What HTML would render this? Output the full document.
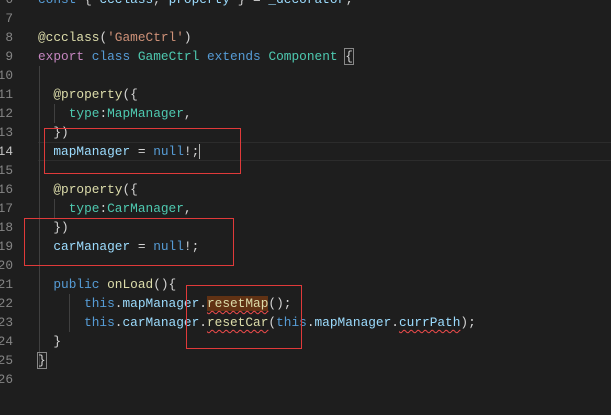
<!DOCTYPE html><html><head><style>
body{margin:0;width:611px;height:415px;background:#1e1e1e;overflow:hidden;position:relative;font-family:"Liberation Mono",monospace;font-size:12.8px}
.l{position:absolute;left:0;height:19px;line-height:19px;white-space:pre;color:#d4d4d4}
.n{position:absolute;left:-20px;width:33px;text-align:right;color:#858585}
.c{position:absolute;left:38px}
.k{color:#569cd6}.g{color:#4ec9b0}.s{color:#ce9178}.f{color:#dcdcaa}.v{color:#9cdcfe}.p{color:#c586c0}
.sq{text-decoration:underline wavy #f14c4c;text-decoration-thickness:1px;text-underline-offset:3px}
.box{position:absolute;border:1.5px solid #e03a3a}
.ig{position:absolute;width:1px;background:#404040}
</style></head><body>
<div style="position:absolute;left:38px;top:142px;width:573px;height:17px;border-top:1px solid #2c2c2c;border-bottom:1px solid #2c2c2c"></div>
<div class="ig" style="left:39px;top:66px;height:302px"></div>
<div class="ig" style="left:54px;top:104px;height:19px"></div>
<div class="ig" style="left:54px;top:199px;height:19px"></div>
<div class="ig" style="left:69px;top:294px;height:38px"></div>
<div class="l" style="top:-10px"><span class="n">6</span><span class="c"><span class="k">const</span> { <span class="v">ccclass</span>, <span class="v">property</span> } = <span class="v">_decorator</span>;</span></div>
<div class="l" style="top:9px"><span class="n">7</span></div>
<div class="l" style="top:28px"><span class="n">8</span><span class="c"><span class="f">@ccclass</span>(<span class="s">'GameCtrl'</span>)</span></div>
<div class="l" style="top:47px"><span class="n">9</span><span class="c"><span class="p">export</span> <span class="k">class</span> <span class="g">GameCtrl</span> <span class="k">extends</span> <span class="g">Component</span> <span style="outline:1px solid #888">{</span></span></div>
<div class="l" style="top:66px"><span class="n">10</span></div>
<div class="l" style="top:85px"><span class="n">11</span><span class="c">  <span class="f">@property</span>({</span></div>
<div class="l" style="top:104px"><span class="n">12</span><span class="c">    <span class="g">type</span>:<span class="g">MapManager</span>,</span></div>
<div class="l" style="top:123px"><span class="n">13</span><span class="c">  })</span></div>
<div class="l" style="top:142px"><span class="n" style="color:#c6c6c6">14</span><span class="c">  <span class="v">mapManager</span> = <span class="k">null</span>!;<span style="border-left:1.5px solid #aeafad"> </span></span></div>
<div class="l" style="top:161px"><span class="n">15</span></div>
<div class="l" style="top:180px"><span class="n">16</span><span class="c">  <span class="f">@property</span>({</span></div>
<div class="l" style="top:199px"><span class="n">17</span><span class="c">    <span class="g">type</span>:<span class="g">CarManager</span>,</span></div>
<div class="l" style="top:218px"><span class="n">18</span><span class="c">  })</span></div>
<div class="l" style="top:237px"><span class="n">19</span><span class="c">  <span class="v">carManager</span> = <span class="k">null</span>!;</span></div>
<div class="l" style="top:256px"><span class="n">20</span></div>
<div class="l" style="top:275px"><span class="n">21</span><span class="c">  <span class="k">public</span> <span class="f">onLoad</span>(){</span></div>
<div class="l" style="top:294px"><span class="n">22</span><span class="c">      <span class="k">this</span>.<span class="v">mapManager</span>.<span class="f sq" style="background:#613214">resetMap</span>();</span></div>
<div class="l" style="top:313px"><span class="n">23</span><span class="c">      <span class="k">this</span>.<span class="v">carManager</span>.<span class="f sq">resetCar</span>(<span class="k">this</span>.<span class="v">mapManager</span>.<span class="v sq">currPath</span>);</span></div>
<div class="l" style="top:332px"><span class="n">24</span><span class="c">  }</span></div>
<div class="l" style="top:351px"><span class="n">25</span><span class="c"><span style="outline:1px solid #888">}</span></span></div>
<div class="l" style="top:370px"><span class="n">26</span></div>
<div class="box" style="left:44px;top:128px;width:195px;height:44px"></div>
<div class="box" style="left:24px;top:218px;width:208px;height:46px"></div>
<div class="box" style="left:186px;top:285px;width:114px;height:62px"></div>
</body></html>
